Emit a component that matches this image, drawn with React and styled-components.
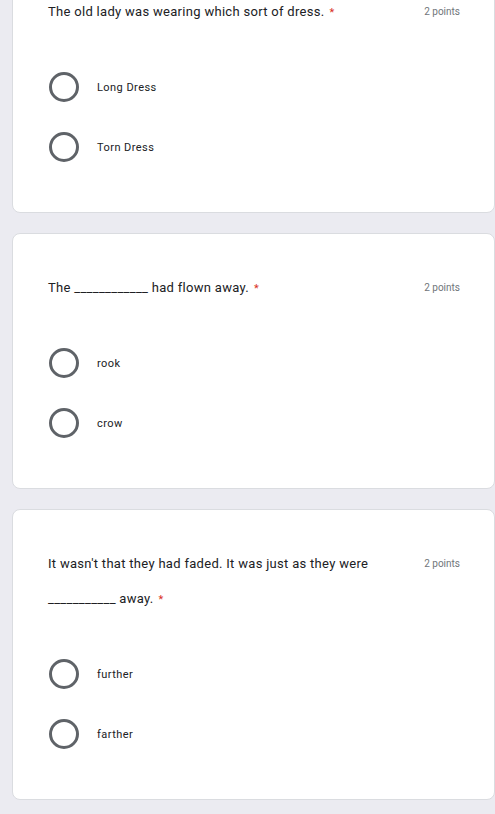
import React from "react";
import styled, { createGlobalStyle } from "styled-components";

const Global = createGlobalStyle`
  html, body { margin: 0; padding: 0; background: #ebebf1; }
  body { font-family: Roboto, "Noto Sans", Arial, sans-serif; overflow: hidden; }
`;

const Page = styled.main`
  width: 495px;
  height: 814px;
  overflow: hidden;
  background: #ebebf1;
  box-sizing: border-box;
  padding-left: 12px;
`;

const List = styled.div`
  display: flex;
  flex-direction: column;
  gap: 20px;
  margin-top: -43px;
  width: 483px;
`;

const Card = styled.section`
  background: #ffffff;
  border: 1px solid #dadce0;
  border-radius: 8px;
  padding: 36px 34px 35px 35px;
  display: flex;
  flex-direction: column;
  gap: 27px;
`;

const Header = styled.div`
  display: flex;
  align-items: flex-start;
  gap: 24px;
`;

const Question = styled.div`
  flex: 1;
  font-size: 13px;
  line-height: 35px;
  color: #202124;
  letter-spacing: 0.3px;
`;

const Required = styled.span`
  color: #d93025;
  font-size: 11px;
  padding-left: 5px;
`;

const Points = styled.div`
  font-size: 10px;
  line-height: 35px;
  color: #70757a;
  white-space: nowrap;
`;

const Options = styled.div`
  display: flex;
  flex-direction: column;
`;

const Option = styled.label`
  display: flex;
  align-items: center;
  height: 60px;
  gap: 18px;
  padding-left: 1px;
`;

const Radio = styled.span`
  width: 30px;
  height: 30px;
  box-sizing: border-box;
  border: 3px solid #5f6368;
  border-radius: 50%;
  flex: none;
`;

const OptionText = styled.span`
  font-size: 11px;
  color: #202124;
  letter-spacing: 0.45px;
`;

const questions = [
  {
    text: "The old lady was wearing which sort of dress.",
    options: ["Long Dress", "Torn Dress"],
  },
  {
    text: "The ____________ had flown away.",
    options: ["rook", "crow"],
  },
  {
    text: "It wasn't that they had faded. It was just as they were ___________ away.",
    options: ["further", "farther"],
  },
];

export default function App() {
  return (
    <>
      <Global />
      <Page>
        <List>
          {questions.map((q, i) => (
            <Card key={i}>
              <Header>
                <Question>
                  {q.text}
                  <Required>*</Required>
                </Question>
                <Points>2 points</Points>
              </Header>
              <Options>
                {q.options.map((o) => (
                  <Option key={o}>
                    <Radio />
                    <OptionText>{o}</OptionText>
                  </Option>
                ))}
              </Options>
            </Card>
          ))}
        </List>
      </Page>
    </>
  );
}
